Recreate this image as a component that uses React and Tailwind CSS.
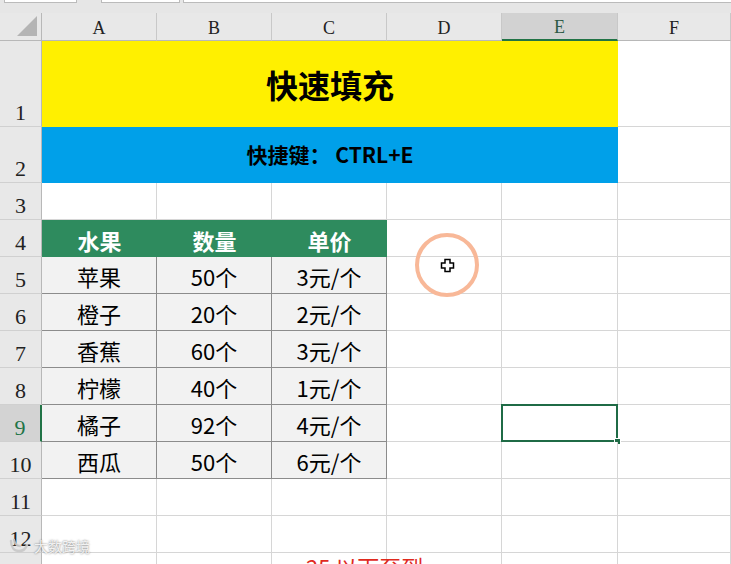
import clsx from "clsx";

const CJK = "font-['Noto_Sans_CJK_SC','Noto_Sans',sans-serif]";
const SERIF = "font-['Liberation_Serif',serif]";

const fruits = [
  ["苹果", "50个", "3元/个"],
  ["橙子", "20个", "2元/个"],
  ["香蕉", "60个", "3元/个"],
  ["柠檬", "40个", "1元/个"],
  ["橘子", "92个", "4元/个"],
  ["西瓜", "50个", "6元/个"],
];

function RowHead({ n, active }) {
  return (
    <div
      className={clsx(
        "flex items-end justify-center pb-[2px] border-b border-[#d0d0d0] text-[22px] leading-none",
        SERIF,
        active
          ? "bg-[#d3d3d3] text-[#217346] border-r-2 border-r-[#217346]"
          : "bg-[#e8e8e8] text-[#222] border-r border-r-[#b8b8b8]"
      )}
    >
      {n}
    </div>
  );
}

function Cell({ className, children }) {
  return (
    <div
      className={clsx(
        "flex items-center justify-center border-r border-b border-[#d6d6d6] bg-white",
        className
      )}
    >
      {children}
    </div>
  );
}

function DataCell({ children }) {
  return (
    <div className="flex items-center justify-center pt-[3px] border-r border-b border-[#8c8c8c] bg-[#f2f2f2] text-[22px] text-black">
      {children}
    </div>
  );
}

function ColHead({ label, active }) {
  return (
    <div
      className={clsx(
        "flex items-center justify-center pt-[3px] text-[18px] border-r border-[#c8c8c8]",
        SERIF,
        active
          ? "bg-[#d2d2d2] text-[#2d5a45] border-b-2 border-b-[#217346]"
          : "bg-[#e8e8e8] text-[#222] border-b border-b-[#b8b8b8]"
      )}
    >
      {label}
    </div>
  );
}

export default function App() {
  return (
    <div className={clsx("relative w-[731px] h-[564px] overflow-hidden bg-white", CJK)}>
      {/* ribbon remnants */}
      <div className="h-[13px] bg-[#e6e6e6] flex items-start gap-[3px] pl-[4px]">
        <div className="w-[73px] h-[3px] bg-white border-x border-b border-[#bbb]" />
        <div className="w-[18px]" />
        <div className="w-[79px] h-[3px] bg-white border-x border-b border-[#bbb]" />
        <div className="flex-1 h-[3px] bg-white border-l border-b border-[#bbb]" />
      </div>

      <div className="grid grid-cols-[42px_115px_115px_115px_115px_116px_1fr] grid-rows-[28px_86px_56px_repeat(11,37px)]">
        {/* column headers */}
        <div className="relative bg-[#e8e8e8] border-r border-b border-[#b8b8b8]">
          <svg className="absolute right-[4px] bottom-[4px]" width="20" height="20" viewBox="0 0 20 20">
            <polygon points="20,0 20,20 0,20" fill="#b4b4b4" />
          </svg>
        </div>
        {["A", "B", "C", "D", "E", "F"].map((c) => (
          <ColHead key={c} label={c} active={c === "E"} />
        ))}

        {/* row 1 */}
        <RowHead n="1" />
        <div className="col-span-5 flex items-center justify-center bg-[#fff000] text-[32px] font-bold text-black">
          快速填充
        </div>
        <Cell />

        {/* row 2 */}
        <RowHead n="2" />
        <div className="col-span-5 flex items-center justify-center bg-[#00a0e9] text-[21px] font-bold text-black">
          快捷键：&nbsp;CTRL+E
        </div>
        <Cell />

        {/* row 3 */}
        <RowHead n="3" />
        <Cell />
        <Cell />
        <Cell />
        <Cell />
        <Cell />
        <Cell />

        {/* row 4 */}
        <RowHead n="4" />
        {["水果", "数量", "单价"].map((h) => (
          <div
            key={h}
            className="flex items-center justify-center pt-[3px] bg-[#2e8b5e] text-white text-[22px] font-bold"
          >
            {h}
          </div>
        ))}
        <Cell />
        <Cell />
        <Cell />

        {/* rows 5-10 */}
        {fruits.map((row, i) => {
          const n = i + 5;
          return [
            <RowHead key={"h" + n} n={n} active={n === 9} />,
            ...row.map((v, j) => <DataCell key={n + "-" + j}>{v}</DataCell>),
            <Cell key={"d" + n} />,
            <Cell key={"e" + n} className="relative">
              {n === 9 && (
                <>
                  <div className="absolute -left-px -top-px -right-px -bottom-px border-2 border-[#1f6b46]" />
                  <div className="absolute -right-[4px] -bottom-[4px] w-[7px] h-[7px] bg-[#1f6b46] border border-white" />
                </>
              )}
            </Cell>,
            <Cell key={"f" + n} />,
          ];
        })}

        {/* rows 11-13 */}
        {[11, 12, ""].map((n) => [
          <RowHead key={"h" + n} n={n} />,
          ...[0, 1, 2, 3, 4, 5].map((j) => <Cell key={n + "-" + j} />),
        ])}
      </div>

      {/* click highlight + cursor */}
      <div className="absolute left-[415px] top-[233px] w-[64px] h-[64px] rounded-full border-[4px] border-[#f8b898]" />
      <svg className="absolute left-[440px] top-[258px]" width="15" height="15" viewBox="0 0 15 15">
        <path
          d="M5 1.5h5v3.5h3.5v5H10v3.5H5V10H1.5V5H5z"
          fill="white"
          stroke="black"
          strokeWidth="1.5"
        />
      </svg>

      {/* watermark */}
      <div className="absolute left-[8px] top-[537px] flex items-center gap-[4px] text-white/85 text-[14px] leading-none [text-shadow:0_0_2px_rgba(0,0,0,0.6)]">
        <svg width="22" height="18" viewBox="0 0 22 18">
          <path
            d="M3 4c0 6 3 10 8 10s7-3 8-6M6 3c1 4 3 6 6 6"
            fill="none"
            stroke="rgba(200,200,200,0.9)"
            strokeWidth="2.4"
            strokeLinecap="round"
          />
        </svg>
        <span>大数跨境</span>
      </div>

      {/* subtitle, clipped at the bottom */}
      <div className="absolute left-[306px] top-[555px] text-[22px] leading-none text-[#e02a1e] whitespace-nowrap">
        25 以下至到
      </div>
    </div>
  );
}
